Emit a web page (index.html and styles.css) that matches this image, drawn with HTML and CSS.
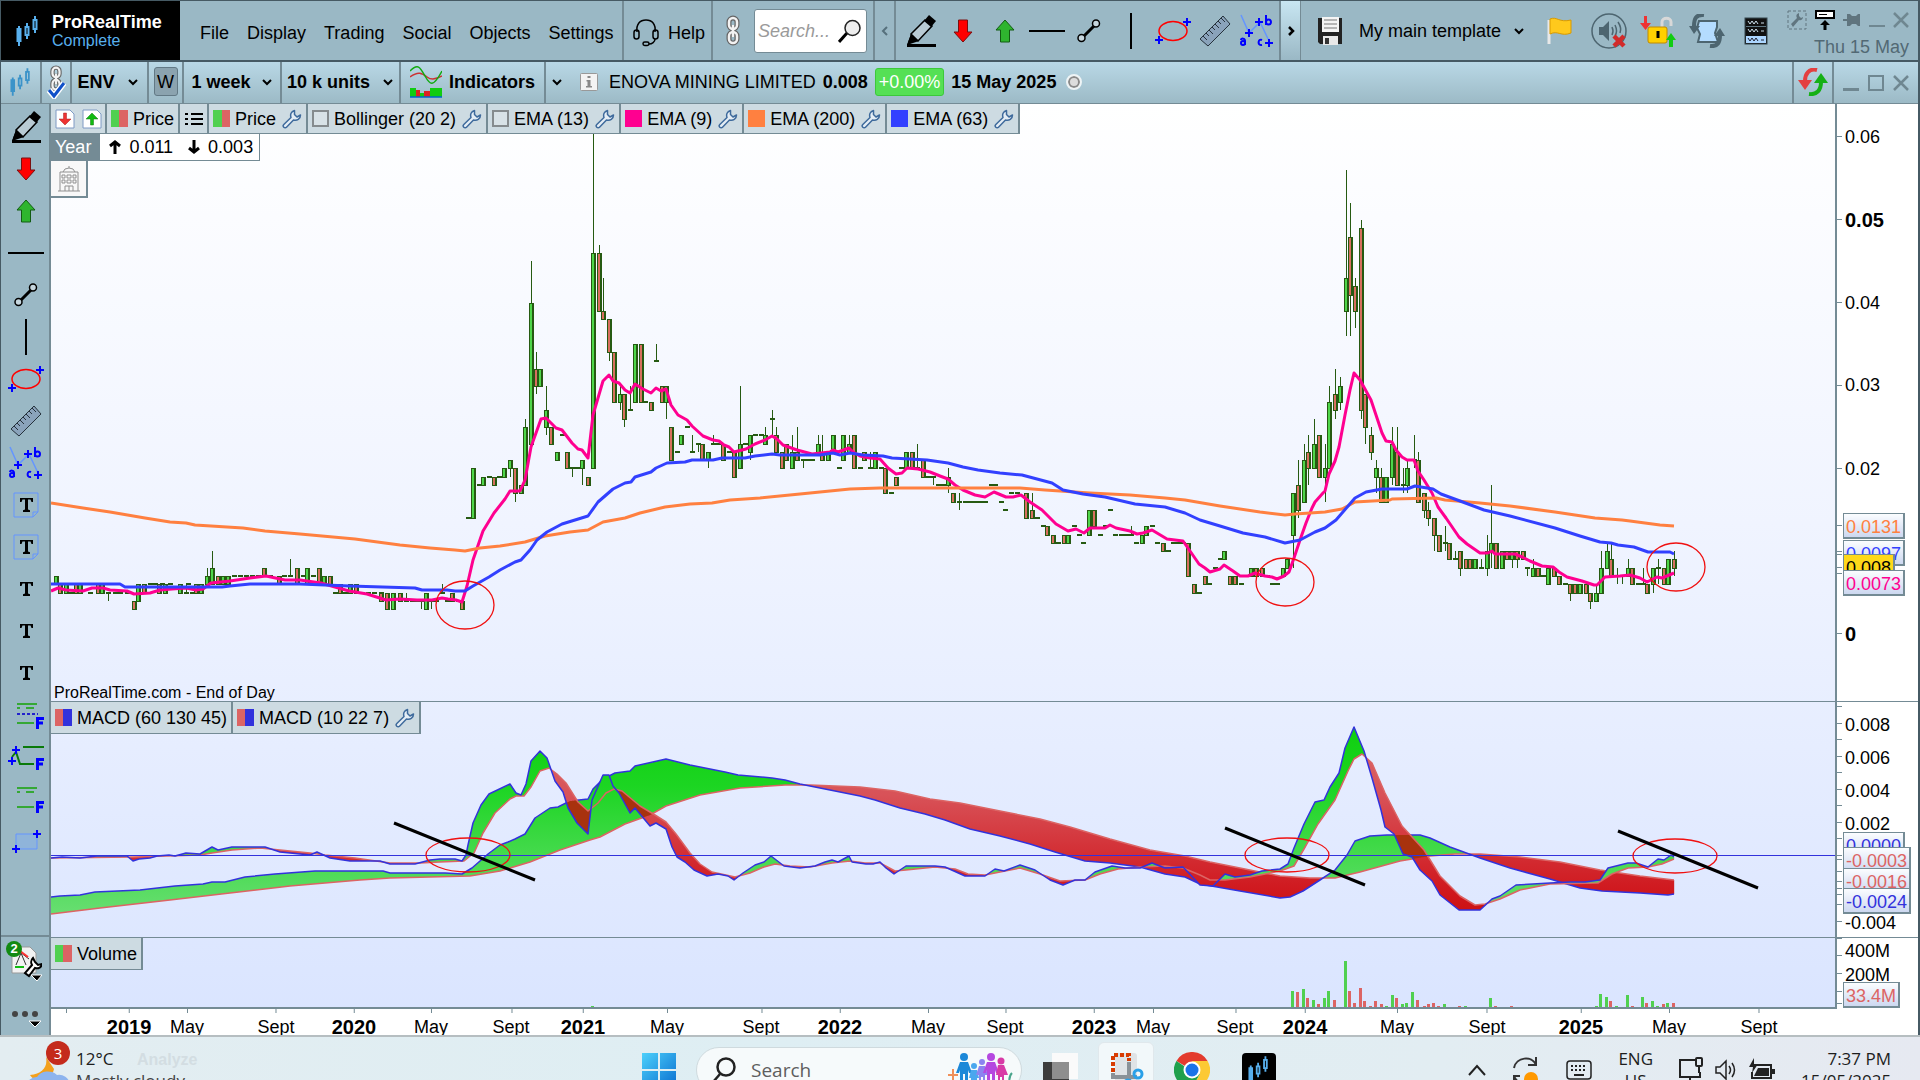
FILE: index.html
```html
<!DOCTYPE html>
<html lang="en">
<head>
<meta charset="utf-8">
<title>ProRealTime - ENOVA MINING LIMITED</title>
<link rel="stylesheet" href="styles.css">
</head>
<body>
<svg class="sprite" aria-hidden="true">
  <symbol id="i-candles" viewBox="0 0 24 30"><g fill="none" stroke="currentColor" stroke-width="2"><path d="M3 10v20M11 7v16M19 0v17"/><path fill="currentColor" d="M1.500 13h3v12h-3z"/><path fill="var(--candle-bg,#000)" d="M9.500 11h3v8h-3zM17.500 4h3v9h-3z"/></g></symbol>
  <symbol id="i-chain" viewBox="0 0 18 32"><g fill="none"><g stroke="#666" stroke-width="5"><rect x="5" y="3" width="8" height="11" rx="4"/><rect x="5" y="17" width="8" height="11" rx="4"/><path d="M9 10v12"/></g><g stroke="#f2f2f2" stroke-width="2.500"><rect x="5" y="3" width="8" height="11" rx="4"/><rect x="5" y="17" width="8" height="11" rx="4"/><path d="M9 10v12"/></g></g></symbol>
  <symbol id="i-pencil" viewBox="0 0 30 32"><path d="M1 29h29v3H1z"/><path d="M1 30 5 19l5 6z"/><path d="m5 19 14-14 7 6-14 15z" fill="#b9cbd4" stroke="#000" stroke-width="1.500"/><path d="m18 6 5-6 7 6-5 6z"/><path d="m1 30 4-11 8 7z"/></symbol>
  <symbol id="i-down" viewBox="0 0 20 24"><path d="M5.500 1h9v12H19l-9 10-9-10h4.500z" fill="#f00" stroke="#7a1010"/></symbol>
  <symbol id="i-up" viewBox="0 0 20 24"><path d="M5.500 23h9V11H19L10 1 1 11h4.500z" fill="#2fb52f" stroke="#125c12"/></symbol>
  <symbol id="i-hline" viewBox="0 0 36 4"><path d="M0 1h36v2H0z"/></symbol>
  <symbol id="i-vline" viewBox="0 0 4 36"><path d="M1 0h2v36H1z"/></symbol>
  <symbol id="i-segment" viewBox="0 0 24 24"><path d="M6 18 18 6" stroke="#000" stroke-width="3"/><circle cx="4.500" cy="19" r="3.500" fill="#c6d6de" stroke="#000" stroke-width="1.500"/><circle cx="19" cy="4.500" r="3.500" fill="#c6d6de" stroke="#000" stroke-width="1.500"/></symbol>
  <symbol id="i-ellipse" viewBox="0 0 36 28"><ellipse cx="18" cy="14" rx="14" ry="9.500" fill="none" stroke="#f00" stroke-width="1.500"/><path d="M32 1v8M28 5h8M4 19v8M0 23h8" stroke="#00f" stroke-width="2"/></symbol>
  <symbol id="i-ruler" viewBox="0 0 32 32"><path d="M1 24 24 1l7 8L9 31z" fill="#8aa3bb" stroke="#26323c"/><path d="m4 21 4 4m-1-7 3 3m0-6 4 4m-1-7 3 3m0-6 4 4m-1-7 3 3m0-6 4 4" stroke="#26323c" fill="none"/></symbol>
  <symbol id="i-abc" viewBox="0 0 34 34"><path d="m1 1 8 18L20 8l10 21" fill="none" stroke="#6495ff" stroke-width="1.500"/><g fill="none" stroke="#00f" stroke-width="2"><path d="M9 15v8M5 19h8M19 4v8M15 8h8M29 25v8M25 29h8M26 1v10M5 31v-4c0-3-4-3-4-1M22 26c-4-2-5 6 0 5"/><circle cx="28.500" cy="8" r="2.500"/><circle cx="3" cy="29" r="2"/></g></symbol>
  <symbol id="i-textbox" viewBox="0 0 26 26"><path d="M1 1h24v19l-5 5H1zM20 25v-5h5" fill="none" stroke="#6495ff"/><path d="M7 6h13v4h-1.500l-1-2.500H15v10l2 .7V20h-7v-1.800l2-.7v-10H9.500l-1 2.500H7z"/></symbol>
  <symbol id="i-text" viewBox="0 0 26 26"><path d="M7 6h13v4h-1.500l-1-2.500H15v10l2 .7V20h-7v-1.800l2-.7v-10H9.500l-1 2.500H7z"/></symbol>
  <symbol id="i-fib1" viewBox="0 0 36 28"><path d="M9 3h20M9 7h3m6 0h8M9 22h17" stroke="#35a835" stroke-width="2"/><path d="M9 13h21" stroke="#22c" stroke-width="2" stroke-dasharray="3 2"/><path d="M29.500 28V18m-1.500-.500h8M28 22h7" stroke="#00f" stroke-width="3"/></symbol>
  <symbol id="i-fib2" viewBox="0 0 36 28"><path d="M15 4h21M4 14 8 9l4 12h14" fill="none" stroke="#0a7a0a" stroke-width="2"/><path d="M8 3v8M4 7h8M4 14v8M0 18h8" stroke="#00f" stroke-width="2"/><path d="M29.500 27V17m-1.500-.500h8M28 21h7" stroke="#00f" stroke-width="3"/></symbol>
  <symbol id="i-fib3" viewBox="0 0 36 28"><path d="M9 3h20M9 7h3m6 0h8M9 22h17" stroke="#35a835" stroke-width="2"/><path d="M29.500 28V18m-1.500-.500h8M28 22h7" stroke="#00f" stroke-width="3"/></symbol>
  <symbol id="i-rect" viewBox="0 0 30 24"><path d="M5 5h21v15H5z" fill="#8fb4da" stroke="#6495ff"/><path d="M26 1v8M22 5h8M5 16v8M1 20h8" stroke="#00f" stroke-width="2"/></symbol>
  <symbol id="i-wrench" viewBox="0 0 20 20"><path d="M12.500 1.500C9 2.500 8 5.500 9 8.500L1.800 15.500a1.800 1.800 0 0 0 2.700 2.700L11.500 11c3.500 1 7-1 7-5l-3.500 2-2.500-2.500z" fill="#e4edf5" stroke="#3e6a9c" stroke-width="1.500" stroke-linejoin="round"/></symbol>
  <symbol id="i-chev" viewBox="0 0 12 8"><path d="m2 2 4 4 4-4" fill="none" stroke="#000" stroke-width="2"/></symbol>
  <symbol id="i-x" viewBox="0 0 16 16"><path d="m1 1 14 14M15 1 1 15" stroke="#6f8791" stroke-width="2.500"/></symbol>
  <symbol id="i-docdown" viewBox="0 0 20 20"><path d="M1 1h14l4 4v14H1z" fill="#fff" stroke="#7e9ac4"/><path d="M8.500 4h3v6H16l-6 6-6-6h4.500z" fill="#e33" stroke="#a22" stroke-width=".5"/></symbol>
  <symbol id="i-docup" viewBox="0 0 20 20"><path d="M1 1h14l4 4v14H1z" fill="#fff" stroke="#7e9ac4"/><path d="M8.500 16h3v-6H16l-6-6-6 6h4.500z" fill="#1b1" stroke="#171" stroke-width=".5"/></symbol>
  <symbol id="i-list" viewBox="0 0 18 14"><path d="M0 1h3v2H0zm6 0h12v2H6zM0 6h3v2H0zm6 0h12v2H6zM0 11h3v2H0zm6 0h12v2H6z"/></symbol>
</svg>

<div class="app">
  <header class="topbar">
    <div class="brand">
      <svg width="24" height="30"><use href="#i-candles"/></svg>
      <div><div class="brand-name">ProRealTime</div><div class="brand-plan">Complete</div></div>
    </div>
    <nav class="menu">
      <a href="#">File</a><a href="#">Display</a><a href="#">Trading</a><a href="#">Social</a><a href="#">Objects</a><a href="#">Settings</a>
    </nav>
    <button class="cell help">
      <svg width="26" height="28" viewBox="0 0 26 28" fill="none" stroke="#000" stroke-width="1.500"><path d="M4 13C3 5 7 1 13 1s10 4 9 12"/><rect x="1" y="11" width="5" height="9" rx="2.500"/><rect x="20" y="11" width="5" height="9" rx="2.500"/><path d="M22 20c0 3-3 5-6 5"/><rect x="10" y="23" width="6" height="3.500" rx="1.700"/></svg>
      Help
    </button>
    <div class="cell search-cell">
      <button class="plain" aria-label="Link"><svg width="18" height="32"><use href="#i-chain"/></svg></button>
      <label class="search"><input type="text" placeholder="Search..." aria-label="Search">
        <svg width="24" height="24" viewBox="0 0 24 24"><path d="m1 23 8-9" stroke="#000" stroke-width="3"/><circle cx="14.500" cy="9" r="7.500" fill="#eee" stroke="#222" stroke-width="1.500"/></svg></label>
    </div>
    <button class="cell scroll dim" aria-label="Previous tools"><svg width="8" height="12" viewBox="0 0 8 12"><path d="M6 2 2 6l4 4" fill="none" stroke="#56707c" stroke-width="2"/></svg></button>
    <div class="tools">
      <button aria-label="Pencil"><svg width="30" height="32"><use href="#i-pencil"/></svg></button>
      <button aria-label="Down arrow"><svg width="20" height="24"><use href="#i-down"/></svg></button>
      <button aria-label="Up arrow"><svg width="20" height="24"><use href="#i-up"/></svg></button>
      <button aria-label="Horizontal line"><svg width="36" height="4"><use href="#i-hline"/></svg></button>
      <button aria-label="Segment"><svg width="24" height="24"><use href="#i-segment"/></svg></button>
      <button aria-label="Vertical line"><svg width="4" height="36"><use href="#i-vline"/></svg></button>
      <button aria-label="Ellipse"><svg width="36" height="28"><use href="#i-ellipse"/></svg></button>
      <button aria-label="Ruler"><svg width="32" height="32"><use href="#i-ruler"/></svg></button>
      <button aria-label="Pattern"><svg width="34" height="34"><use href="#i-abc"/></svg></button>
    </div>
    <button class="cell scroll more" aria-label="More tools"><svg width="8" height="12" viewBox="0 0 8 12"><path d="m2 2 4 4-4 4" fill="none" stroke="#000" stroke-width="2.500"/></svg></button>
    <button class="save" aria-label="Save template"><svg width="26" height="28" viewBox="0 0 26 28"><path d="M1 1h24v26H3l-2-2z" fill="#222"/><path d="M5 0h17v15H5z" fill="#f4f4f4"/><path d="M7 3h13M7 7h13M7 11h13" stroke="#777"/><path d="M6 19h15v9H6z" fill="#e8e8e8"/><path d="M8 21h4v6H8z" fill="#333"/></svg></button>
    <button class="template">My main template <svg width="12" height="8"><use href="#i-chev"/></svg></button>
    <div class="actions">
      <button aria-label="Flag"><svg width="26" height="28" viewBox="0 0 26 28"><path d="M2 3v24" stroke="#e8e8e8" stroke-width="3"/><path d="M3 2c7-3 9 4 21 1v13c-10 4-13-3-21 1z" fill="#ffc91c" stroke="#d99a00"/></svg></button>
      <button aria-label="Sound off"><svg width="36" height="36" viewBox="0 0 36 36"><circle cx="18" cy="18" r="17" fill="none" stroke="#4d6570" stroke-width="1.500"/><path d="M8 14h4l6-6v20l-6-6H8z" fill="#4d6570"/><path d="M21 14q2 4 0 8m3-10q3 6 0 11m3-14q4 6 2 11" fill="none" stroke="#4d6570" stroke-width="1.500"/><path d="m23 23 10 10m0-10L23 33" stroke="#d22a2a" stroke-width="4.500"/></svg></button>
      <button aria-label="Trading lock"><svg width="36" height="32" viewBox="0 0 36 32"><path d="M22 12V7c0-5 9-5 9 0v4" fill="none" stroke="#d8d8d8" stroke-width="3"/><rect x="8" y="12" width="19" height="16" rx="2" fill="#ffd000" stroke="#c08a00"/><path d="M16.500 16h3v7h-3z"/><path d="M4 1h3v7h4l-5.500 7L0 8h4z" fill="#e33"/><path d="M29 32h4v-7h3l-5-7-5 7h3z" fill="#1c1"/></svg></button>
      <button aria-label="Synchronise"><svg width="36" height="34" viewBox="0 0 36 34"><path d="M10 7h18v6l-2 6 3 9H9l2-8-3-6z" fill="#b4dcff" stroke="#4d6570" stroke-width="2"/><path d="M15 1C7 0 5 5 5 12M21 32c8 1 10-4 10-11" fill="none" stroke="#4d6570" stroke-width="4"/><path d="M0 12h11l-6 8zM36 22H25l6-8z" fill="#4d6570"/></svg></button>
      <button aria-label="Server"><svg width="24" height="28" viewBox="0 0 24 28"><rect x="1" y="1" width="22" height="26" fill="#111" stroke="#34464f"/><path d="M2 19h20v7H2z" fill="#acd6ff"/><path d="M2 9.500h20" stroke="#5f7682"/><path d="m4 4 2 3 2-3 2 3 2-3 2 3m3-1h3M4 12l2 3 2-3 2 3 2-3 2 3m3-1h3" fill="none" stroke="#cfe2ee"/><path d="m4 21 2 3 2-3 2 3 2-3 2 3m3-1h3" fill="none" stroke="#223"/></svg></button>
    </div>
    <div class="session">
      <div class="session-controls">
        <button aria-label="Settings"><svg width="20" height="20" viewBox="0 0 20 20"><rect x="1" y="1" width="18" height="18" fill="none" stroke="#60757f" stroke-dasharray="3 2"/><path d="M12 3c-3 1-3 3-2 5l-6 6 2 3 6-7c2 1 4-1 4-3l-2 1-2-2z" fill="#60757f"/></svg></button>
        <button aria-label="Dock"><svg width="20" height="20" viewBox="0 0 20 20"><path d="M1 1h18v7H1z" fill="#fff" stroke="#000" stroke-width="2"/><path d="M4 4h8v1H4zM10 10l-5 5h3.500v5h3v-5H15z"/></svg></button>
        <button aria-label="Pin"><svg width="18" height="14" viewBox="0 0 18 14"><path d="M0 6h4V1h3l2 2h4l2-2h2v12h-2l-2-2H9l-2 2H4V8H0z" fill="#60757f"/></svg></button>
        <button aria-label="Minimise"><svg width="16" height="16" viewBox="0 0 16 16"><path d="M0 13h16v2H0z" fill="#6f8791"/></svg></button>
        <button aria-label="Close"><svg width="16" height="16"><use href="#i-x"/></svg></button>
      </div>
      <div class="session-date">Thu 15 May</div>
    </div>
  </header>

  <div class="chartbar">
    <div class="bcell mark"><svg width="22" height="30"><use href="#i-candles"/></svg></div>
    <button class="bcell linked" aria-label="Linked chart"><svg width="20" height="34" viewBox="0 0 20 34"><use href="#i-chain" x="1" y="0" width="18" height="28"/><path d="m3 25 5 6 10-13" fill="none" stroke="#fff" stroke-width="6"/><path d="m3 25 5 6 10-13" fill="none" stroke="#1050c8" stroke-width="3"/></svg></button>
    <button class="bcell sym">ENV <svg width="12" height="8"><use href="#i-chev"/></svg></button>
    <div class="bcell wcell"><button class="wbtn">W</button></div>
    <button class="bcell frame">1 week <svg width="12" height="8"><use href="#i-chev"/></svg></button>
    <button class="bcell units">10 k units <svg width="12" height="8"><use href="#i-chev"/></svg></button>
    <button class="bcell indi"><svg width="32" height="32" viewBox="0 0 32 32"><path d="M0 11C8 5 12 7 17 11s10 2 15-1" fill="none" stroke="#c33" stroke-width="1.500"/><path d="M0 5C8-3 10 1 15 10s8 12 17-5" fill="none" stroke="#1a1" stroke-width="1.500"/><path d="M0 22h6v9H0zm20 0h6v9h-6zm6 0h6v9h-6zM10 27h4v4h-4z" fill="#1c1"/><path d="M6 24h4v7H6zm8 1h6v6h-6z" fill="#d22"/><path d="M0 31h32" stroke="#06c" stroke-width="1.500"/></svg>Indicators</button>
    <button class="drop" aria-label="Indicator list"><svg width="12" height="8"><use href="#i-chev"/></svg></button>
    <button class="info" aria-label="Information"><svg width="18" height="18" viewBox="0 0 18 18"><rect x=".5" y=".5" width="17" height="17" rx="1" fill="#f3f3f3" stroke="#999"/><path d="M7.500 3h3v2h-3zM6.500 7h4v6h1.500v1.500h-6V13h1.500V8.500h-1z" fill="#888"/></svg></button>
    <div class="quote"><span>ENOVA MINING LIMITED</span><b>0.008</b><span class="pct">+0.00%</span><b>15 May 2025</b><span class="status"></span></div>
    <button class="bcell refresh" aria-label="Refresh"><svg width="30" height="28" viewBox="0 0 30 28"><path d="M19 2C11 0 7 6 7 13" fill="none" stroke="#e34040" stroke-width="4"/><path d="M0 12h14l-7 10z" fill="#e34040"/><path d="M11 26c8 1 12-4 12-12" fill="none" stroke="#15b015" stroke-width="4"/><path d="M30 15H16l7-10z" fill="#15b015"/></svg></button>
    <div class="wincontrols">
      <button aria-label="Minimise chart"><svg width="16" height="16" viewBox="0 0 16 16"><path d="M0 13h16v3H0z" fill="#6f8791"/></svg></button>
      <button aria-label="Maximise chart"><svg width="16" height="16" viewBox="0 0 16 16"><path d="M1 1h14v14H1z" fill="none" stroke="#6f8791" stroke-width="2"/></svg></button>
      <button aria-label="Close chart"><svg width="16" height="16"><use href="#i-x"/></svg></button>
    </div>
  </div>

  <main class="workspace">
    <aside class="sidebar">
      <div class="palette">
        <button aria-label="Pencil"><svg width="30" height="32"><use href="#i-pencil"/></svg></button>
        <button aria-label="Down arrow"><svg width="20" height="24"><use href="#i-down"/></svg></button>
        <button aria-label="Up arrow"><svg width="20" height="24"><use href="#i-up"/></svg></button>
        <button aria-label="Horizontal line"><svg width="36" height="4"><use href="#i-hline"/></svg></button>
        <button aria-label="Segment"><svg width="24" height="24"><use href="#i-segment"/></svg></button>
        <button aria-label="Vertical line"><svg width="4" height="36"><use href="#i-vline"/></svg></button>
        <button aria-label="Ellipse"><svg width="36" height="28"><use href="#i-ellipse"/></svg></button>
        <button aria-label="Ruler"><svg width="32" height="32"><use href="#i-ruler"/></svg></button>
        <button aria-label="Pattern"><svg width="34" height="34"><use href="#i-abc"/></svg></button>
        <button aria-label="Note"><svg width="26" height="26"><use href="#i-textbox"/></svg></button>
        <button aria-label="Note"><svg width="26" height="26"><use href="#i-textbox"/></svg></button>
        <button aria-label="Text"><svg width="26" height="26"><use href="#i-text"/></svg></button>
        <button aria-label="Text"><svg width="26" height="26"><use href="#i-text"/></svg></button>
        <button aria-label="Text"><svg width="26" height="26"><use href="#i-text"/></svg></button>
        <button aria-label="Fibonacci retracement"><svg width="36" height="28"><use href="#i-fib1"/></svg></button>
        <button aria-label="Fibonacci projection"><svg width="36" height="28"><use href="#i-fib2"/></svg></button>
        <button aria-label="Fibonacci levels"><svg width="36" height="28"><use href="#i-fib3"/></svg></button>
        <button aria-label="Rectangle"><svg width="30" height="24"><use href="#i-rect"/></svg></button>
      </div>
      <div class="sidebar-foot">
        <button class="reports" aria-label="Reports"><svg width="32" height="40" viewBox="0 0 32 40"><path d="M2 6h18l6 6v20H2z" fill="#f2f2f2" stroke="#999"/><path d="M5 26h9" stroke="#1b1" stroke-width="2"/><path d="m6 24 5-12 5 12M10 11l9 7" fill="none" stroke="#333"/><path d="m10 10 8 6" stroke="#f33" stroke-width="2"/><path d="M23 17c-3 3-2 5-1 7l-7 8 4 3 6-8c3 1 6 0 7-4l-4 1-3-3z" fill="#fff" stroke="#000" stroke-width="2"/><path d="M21 34h11l-5 6z" stroke="#fff"/></svg><span class="count">2</span></button>
        <button class="dots" aria-label="More"><svg width="30" height="18" viewBox="0 0 30 18"><g fill="#444"><circle cx="4" cy="4" r="3"/><circle cx="14" cy="4" r="3"/><circle cx="24" cy="4" r="3"/></g><path d="M18 11h12l-6 6z" stroke="#fff"/></svg></button>
      </div>
    </aside>

    <section class="charts">
      <div class="panel price-panel">
        <svg class="plot" viewBox="51 104 1784 597" preserveAspectRatio="none" id="price"></svg>
        <div class="overlay">
          <div class="legend">
            <div class="chip pair"><button aria-label="Move down"><svg width="20" height="20"><use href="#i-docdown"/></svg></button><button aria-label="Move up"><svg width="20" height="20"><use href="#i-docup"/></svg></button></div>
            <button class="chip"><i class="sw gr"></i>Price</button>
            <button class="chip" aria-label="List"><svg width="18" height="14"><use href="#i-list"/></svg></button>
            <button class="chip"><i class="sw gr"></i>Price<svg width="20" height="20"><use href="#i-wrench"/></svg></button>
            <button class="chip"><i class="sw off"></i>Bollinger (20 2)<svg width="20" height="20"><use href="#i-wrench"/></svg></button>
            <button class="chip"><i class="sw off"></i>EMA (13)<svg width="20" height="20"><use href="#i-wrench"/></svg></button>
            <button class="chip"><i class="sw pink"></i>EMA (9)<svg width="20" height="20"><use href="#i-wrench"/></svg></button>
            <button class="chip"><i class="sw orange"></i>EMA (200)<svg width="20" height="20"><use href="#i-wrench"/></svg></button>
            <button class="chip"><i class="sw blue"></i>EMA (63)<svg width="20" height="20"><use href="#i-wrench"/></svg></button>
          </div>
          <div class="range"><span class="year">Year</span><span class="hl"><svg width="14" height="14" viewBox="0 0 14 14"><path d="M7 1v13M2 6l5-4 5 4" fill="none" stroke="#000" stroke-width="3"/></svg>0.011</span><span class="hl"><svg width="14" height="14" viewBox="0 0 14 14"><path d="M7 0v13M2 8l5 4 5-4" fill="none" stroke="#000" stroke-width="3"/></svg>0.003</span></div>
          <button class="company" aria-label="Company"><svg width="22" height="26" viewBox="0 0 22 26" fill="none" stroke="#909090"><path d="M0 25h22M2 25V6h18v19M5 6q1-4 6-4t6 4M11 2V0M7 25v-5h8v5M11 20v5"/><path d="M4 9h3v3H4zm5 0h4v3H9zm6 0h3v3h-3zM4 14h3v3H4zm5 0h4v3H9zm6 0h3v3h-3z"/></svg></button>
        </div>
        <div class="source">ProRealTime.com - End of Day</div>
      </div>
      <div class="axis" id="price-axis"></div>

      <div class="panel macd-panel">
        <svg class="plot" viewBox="51 702 1784 235" preserveAspectRatio="none" id="macd"></svg>
        <div class="overlay"><div class="legend">
          <button class="chip"><i class="sw rb"></i>MACD (60 130 45)</button>
          <button class="chip"><i class="sw rb"></i>MACD (10 22 7)<svg width="20" height="20"><use href="#i-wrench"/></svg></button>
        </div></div>
      </div>
      <div class="axis" id="macd-axis"></div>

      <div class="panel volume-panel">
        <svg class="plot" viewBox="51 938 1784 69" preserveAspectRatio="none" id="volume"></svg>
        <div class="overlay"><div class="legend"><button class="chip"><i class="sw gr"></i>Volume</button></div></div>
      </div>
      <div class="axis" id="volume-axis"></div>
      <div class="times" id="times"></div>
    </section>
  </main>
</div>

<footer class="taskbar">
  <div class="taskrow">
    <button class="weather">
      <span class="wicon"><svg width="42" height="44" viewBox="0 0 42 44"><path d="M18 2c2 10-4 17-16 18 4 8 22 6 24-6z" fill="#f3a01c"/><path d="M8 42a10 10 0 0 1 1-20 12 10 0 0 1 20-2 10 10 0 0 1 4 22z" fill="#8db4ee"/></svg><span class="alert">3</span></span>
      <span class="wtext">12°C<br><span class="soft">Mostly cloudy</span></span>
    </button>
    <span class="ghost">Analyze</span>
    <div class="center">
      <button class="start" aria-label="Start"><svg width="34" height="34" viewBox="0 0 34 34"><defs><linearGradient id="win" x2="1" y2="1"><stop stop-color="#4cd0fb"/><stop offset="1" stop-color="#0a6fd0"/></linearGradient></defs><path d="M0 0h16v16H0zM18 0h16v16H18zM0 18h16v16H0zM18 18h16v16H18z" fill="url(#win)"/></svg></button>
      <label class="pill"><svg width="24" height="26" viewBox="0 0 24 26" fill="none" stroke="#222" stroke-width="2.500"><circle cx="13" cy="10" r="8.500"/><path d="m7 17-6 7"/></svg><input type="text" placeholder="Search" aria-label="Search Windows">
        <svg width="66" height="34" viewBox="0 0 66 34"><path d="M5 16v14M0 22h10" stroke="#f0905a" stroke-width="2"/><g fill="#1c88d8"><circle cx="16" cy="4" r="4"/><path d="M12 9h8l4 11h-3l-1-3v17h-3V21h-2v13h-3V17l-1 3H8z"/></g><g fill="#4aa7ee"><circle cx="26" cy="13" r="3"/><path d="M23 17h6l2 8h-2v9h-2v-7h-2v7h-2v-9h-2z"/></g><g fill="#8c84f0"><circle cx="34" cy="9" r="3"/><path d="M31 13h6l3 9h-3v12h-2V24h-2v10h-2V22h-3z"/></g><g fill="#b548e0"><circle cx="43" cy="4" r="4"/><path d="M39 9h8l4 11h-3l-1-3v17h-3V21h-2v13h-3V17l-1 3h-3z"/></g><g fill="#d83aa6"><circle cx="53" cy="8" r="3.500"/><path d="M50 12h6l4 10h-4v12h-2V24h-2v10h-2V22h-2z"/></g><path d="M64 20q-4 4-2 12" stroke="#4aa58c" stroke-width="2" fill="none"/></svg></label>
      <button aria-label="Task view"><svg width="36" height="36" viewBox="0 0 36 36"><path d="M10 1h26v26H10z" fill="#fafafa"/><path d="M1 10h26v26H1z" fill="#3c3c3c"/><path d="M10 10h17v17H10z" fill="#8e8e8e"/></svg></button>
      <button class="active" aria-label="Snipping Tool"><svg width="36" height="36" viewBox="0 0 36 36"><rect x="7" y="1" width="22" height="32" rx="3" fill="#dfe3e6"/><path d="M5 20V3h16v6" fill="none" stroke="#d83b01" stroke-width="4" stroke-dasharray="4 2"/><path d="M5 21v4h24M21 10v20" fill="none" stroke="#8a9298" stroke-width="4"/><circle cx="30" cy="22" r="4" fill="none" stroke="#2aa0e8" stroke-width="3"/><circle cx="20" cy="32" r="4" fill="none" stroke="#2aa0e8" stroke-width="3"/></svg></button>
      <button aria-label="Chrome"><svg width="36" height="36" viewBox="0 0 36 36"><path d="M18 18 2.400 9A18 18 0 0 1 33.600 9z" fill="#e33b2e"/><path d="M18 18h-2L2.400 9A18 18 0 0 0 18 36l8-14z" fill="#1fa04c"/><path d="M18 9h15.600A18 18 0 0 1 18 36l8-14z" fill="#fcc934"/><circle cx="18" cy="18" r="8.500" fill="#fff"/><circle cx="18" cy="18" r="6.500" fill="#1a73e8"/></svg></button>
      <button aria-label="ProRealTime" class="prt"><svg width="22" height="28"><use href="#i-candles"/></svg></button>
    </div>
    <div class="tray">
      <button aria-label="Hidden icons"><svg width="18" height="12" viewBox="0 0 18 12"><path d="m1 11 8-9 8 9" fill="none" stroke="#222" stroke-width="2"/></svg></button>
      <button aria-label="Updates"><svg width="28" height="32" viewBox="0 0 28 32"><path d="M2 14C4 3 20 1 24 11M24 3v8h-8M2 28v-6h6M2 22c2 5 6 8 12 8" fill="none" stroke="#333" stroke-width="2"/><circle cx="19" cy="25" r="7" fill="#f90"/></svg></button>
      <button aria-label="Keyboard"><svg width="26" height="20" viewBox="0 0 26 20"><rect x="1" y="1" width="24" height="18" rx="3" fill="none" stroke="#222" stroke-width="1.500"/><path d="M5 6h16M5 10h16" stroke="#222" stroke-width="2" stroke-dasharray="2 2"/><path d="M8 15h10" stroke="#222" stroke-width="2"/></svg></button>
      <div class="stack lang">ENG<br>US</div>
      <div class="status-icons">
        <svg width="24" height="26" viewBox="0 0 24 26" fill="none" stroke="#222" stroke-width="2"><path d="M17 3H1v17h20v-5M11 20v5M6 25h10"/><rect x="17" y="1" width="6" height="8" rx="1"/><path d="M20 9v7"/></svg>
        <svg width="22" height="22" viewBox="0 0 22 22" fill="none" stroke="#222" stroke-width="1.500"><path d="M1 8h4l6-6v18l-6-6H1zM14 7q3 4 0 8M17 4q5 7 0 14"/></svg>
        <svg width="26" height="24" viewBox="0 0 26 24"><path d="M7 7h15v13H3v-6" fill="none" stroke="#222" stroke-width="2"/><path d="M9 10h11v8H5z" fill="#222"/><path d="M23 11h3v5h-3zM5 0 0 9h4l-1 6 6-9H5z" fill="#222"/></svg>
      </div>
      <div class="stack clock">7:37 PM<br>15/05/2025</div>
    </div>
  </div>
</footer>
<script src="script.js"></script>
</body>
</html>
```
FILE: styles.css
```css
* { box-sizing: border-box; }
html, body { height: 100%; }
body {
  margin: 0;
  display: flex;
  flex-direction: column;
  overflow: hidden;
  font: 18px/22px "Liberation Sans", Arial, sans-serif;
  color: #000;
  --edge: #465a64;
  --rule: #748b95;
  --steel: #9ab8c5;
}
button, input { font: inherit; color: inherit; border: 0; background: none; padding: 0; margin: 0; }
button { display: flex; align-items: center; justify-content: center; }
a { color: inherit; text-decoration: none; }
svg { display: block; flex: none; }
.sprite { position: absolute; width: 0; height: 0; }

.app { flex: 1; min-height: 0; display: flex; flex-direction: column; background: var(--edge); padding: 1px 2px 0 1px; }

/* Top bar */
.topbar { height: 59px; flex: none; display: flex; background: var(--steel); white-space: nowrap; }
.brand { width: 179px; background: #000; color: #58b0ee; display: flex; align-items: center; gap: 12px; padding-left: 15px; }
.brand-name { color: #fff; font-weight: bold; line-height: 20px; }
.brand-plan { font-size: 16px; line-height: 18px; }
.menu { display: flex; align-items: center; gap: 18px; padding: 5px 8px 0 20px; width: 442px; }
.cell { border-left: 2px solid var(--rule); }
.help { width: 89px; gap: 9px; padding: 4px 0 0 3px; }
.search-cell { width: 162px; display: flex; align-items: center; padding-left: 11px; gap: 12px; }
.search { width: 113px; height: 44px; background: #fff; border: 1px solid var(--rule); border-radius: 3px; display: flex; align-items: center; padding: 0 3px; }
.search input { width: 80px; font-style: italic; outline: 0; }
.search input::placeholder { color: #9a9a9a; opacity: 1; }
.scroll { width: 21px; }
.tools { display: flex; border-left: 2px solid var(--rule); padding-left: 4px; width: 385px; }
.more { width: 22px; background: linear-gradient(#c8e6f2, #9ab8c5); border-right: 1px solid var(--rule); }
.tools button { width: 42px; }
.save { width: 58px; }
.template { width: 176px; gap: 12px; justify-content: flex-start; }
.actions { display: flex; }
.actions button { width: 49px; }
.session { margin-left: auto; padding: 9px 9px 0 0; color: #526974; text-align: right; }
.session-controls { display: flex; gap: 8px; align-items: center; height: 20px; }
.session-date { line-height: 34px; }

/* Chart bar */
.chartbar { height: 41px; flex: none; display: flex; margin-top: 2px; background: linear-gradient(#b9d8e6, #9cbac6); font-weight: bold; white-space: nowrap; }
.chartbar > * { padding-bottom: 2px; }
.bcell { border-right: 2px solid var(--rule); }
.mark { width: 41px; display: flex; align-items: center; justify-content: center; color: #3b93c9; --candle-bg: #b0cedc; }
.linked { width: 30px; }
.sym { width: 77px; gap: 12px; padding-right: 3px; }
.wcell { width: 35px; display: flex; align-items: center; justify-content: center; }
.wbtn { width: 24px; height: 29px; border: 1px solid #627985; border-radius: 3px; background: #8ba3af; font-weight: normal; }
.frame { width: 98px; gap: 10px; }
.units { width: 119px; gap: 12px; }
.indi { width: 145px; gap: 7px; }
.drop { width: 22px; }
.info { width: 41px; }
.quote { display: flex; align-items: center; gap: 7px; font-weight: bold; }
.quote span:first-child { font-weight: normal; }
.pct { font-weight: normal; color: #fff; background: #55e055; border: 1px solid #3cc83c; border-radius: 3px; padding: 1px 3px; line-height: 24px; }
.status { width: 16px; height: 16px; border-radius: 50%; border: 2px solid #eef4f6; background: #ddd; box-shadow: inset 0 0 0 2px #8a8a8a; margin-left: 3px; }
.refresh { margin-left: auto; width: 42px; border-left: 2px solid var(--rule); }
.wincontrols { display: flex; gap: 9px; padding: 0 9px; align-items: center; }

/* Workspace */
.workspace { flex: 1; min-height: 0; display: flex; border-top: 1px solid var(--rule); }
.sidebar { width: 50px; flex: none; background: var(--steel); border-right: 2px solid var(--rule); display: flex; flex-direction: column; overflow: hidden; }
.palette { flex: 1; min-height: 0; padding-top: 2px; overflow: hidden; }
.palette button { width: 50px; height: 42px; }
.sidebar-foot { height: 100px; flex: none; border-top: 2px solid var(--rule); display: flex; flex-direction: column; align-items: center; justify-content: space-between; padding: 4px 0 7px 2px; }
.reports { position: relative; }
.count { position: absolute; left: -4px; top: 0; width: 16px; height: 16px; border-radius: 50%; background: #128a12; color: #fff; font: bold 13px/16px "Liberation Sans", sans-serif; }

.charts {
  flex: 1; min-width: 0; display: grid;
  grid-template-columns: minmax(0, 1fr) 83px;
  grid-template-rows: minmax(0, 597fr) minmax(0, 236fr) minmax(0, 72fr) 26px;
  background: linear-gradient(#fff, #f0f4ff 45%, #d9e4ff);
}
.panel { position: relative; min-height: 0; }
.plot { position: absolute; inset: 0; width: 100%; height: 100%; }
.macd-panel, .volume-panel, #macd-axis, #volume-axis { border-top: 1px solid var(--rule); }
.volume-panel { border-bottom: 2px solid var(--rule); }
.overlay { position: relative; display: flex; flex-direction: column; align-items: flex-start; }
.legend { display: flex; white-space: nowrap; border-bottom: 1px solid var(--rule); }
.chip { height: 29px; display: flex; align-items: center; gap: 5px; padding: 0 4px; background: #cddbe2; border-right: 2px solid var(--rule); }
.pair { padding: 0 3px; gap: 6px; }
.chip svg { margin-left: 1px; }
.sw { width: 17px; height: 17px; }
.gr { background: linear-gradient(90deg, #50d050 50%, #dc6464 50%); }
.rb { background: linear-gradient(90deg, #dc6464 50%, #3232dc 50%); }
.off { border: 2px solid #858b8e; background: #d8e2e7; }
.pink { background: #ff0090; }
.orange { background: #ff8040; }
.blue { background: #3240ff; }
.macd-panel .chip, .volume-panel .chip { height: 31px; }
.range { display: flex; background: #fff; border: 1px solid var(--rule); border-width: 0 1px 1px 0; line-height: 26px; }
.year { background: var(--rule); color: #fff; padding: 0 9px 0 4px; }
.hl { display: flex; align-items: center; gap: 7px; padding: 0 6px 0 8px; }
.company { width: 37px; height: 37px; background: #f8f8f8; border: 1px solid var(--rule); border-width: 0 2px 2px 0; }
.source { position: absolute; left: 3px; bottom: 0; font-size: 16px; line-height: 16px; }

.axis { position: relative; background: #fff; border-left: 2px solid var(--rule); overflow: hidden; }
.lab { position: absolute; left: 8px; transform: translateY(-50%); line-height: 20px; }
.lab.major, .time.major { font-size: 20px; font-weight: bold; }
.tick { position: absolute; left: 0; width: 5px; height: 1px; background: var(--rule); }
.tag { position: absolute; left: 6px; height: 26px; line-height: 24px; padding: 1px 2px; border: 1px solid var(--rule); border-right-width: 2px; border-bottom-width: 2px; background: linear-gradient(#fbfdff, #cdd8f0); }
.tag.last { background: #ffd91a; }
.times { grid-column: 1 / -1; background: #fff; position: relative; overflow: hidden; }
.time { position: absolute; top: 0; transform: translateX(-50%); padding-top: 7px; line-height: 22px; }
.time::before { content: ""; position: absolute; left: 50%; top: 0; width: 1px; height: 4px; background: var(--rule); }

/* Task bar */
.taskbar { height: 45px; flex: none; overflow: hidden; border-top: 2px solid #b6bec1; background: linear-gradient(90deg, #e3edf1, #deeef3 40%, #e2edf2 75%, #e6e9f1); font-family: "Open Sans", "Noto Sans", sans-serif; font-size: 17px; color: #1d1d1d; }
.taskrow { height: 66px; display: flex; justify-content: space-between; align-items: center; position: relative; padding: 0 29px 0 28px; white-space: nowrap; }
.weather { gap: 6px; text-align: left; }
.wicon { position: relative; padding-top: 14px; }
.alert { position: absolute; left: 18px; top: 0; width: 24px; height: 24px; border-radius: 50%; background: #c42b1c; color: #fff; font-size: 15px; line-height: 24px; text-align: center; }
.soft { color: #444; }
.ghost { position: absolute; left: 137px; top: 12px; color: #d3dde2; font-family: "Liberation Sans", sans-serif; font-weight: bold; font-size: 16px; }
.center { position: absolute; left: 642px; top: 0; height: 66px; display: flex; align-items: center; gap: 20px; }
.pill { width: 326px; height: 46px; border-radius: 23px; border: 1px solid #cfdade; background: #f6fafb; display: flex; align-items: center; gap: 14px; padding: 0 7px 0 16px; font-size: 19px; }
.pill input { flex: 1; min-width: 0; outline: 0; }
.pill input::placeholder { color: #5e5e5e; opacity: 1; }
.center .active { width: 56px; height: 56px; background: #f2f8fa; border-radius: 6px; border: 1px solid #e0e8ec; }
.prt { width: 34px; height: 34px; background: #000; border-radius: 4px; color: #58b0ee; margin-left: 12px; }
.tray { display: flex; align-items: center; gap: 26px; margin-left: auto; }
.stack { text-align: center; }
.status-icons { display: flex; align-items: center; gap: 12px; }
.clock { text-align: right; width: 90px; }
```
FILE: script.js
```js
const NS = 'http://www.w3.org/2000/svg';
const DARK = '#265a12';

function add(parent, name, attrs) {
  const el = document.createElementNS(NS, name);
  for (const key in attrs) el.setAttribute(key, attrs[key]);
  parent.appendChild(el);
  return el;
}
function pairs(text) {
  return text.trim().split(/\s+/).map(p => p.split(',').map(Number));
}
const toPath = pts => 'M' + pts.map(p => p.join(' ')).join('L');

/* Candles: x, high, open, close, low (prices in thousandths) */
const candles = pairs(`
56,7,6,7,6 60,6,6,5,5 66,6,5,6,5 76,6,6,5,5 80,6,5,6,5 98,6,6,5,5 102,6,5,6,5 108,5,5,5,4 134,4,4,3,3 138,6,4,6,4 144,6,6,5,5
159,6,6,5,5 165,6,5,6,5 180,6,5,6,5 186,6,5,5,5 196,6,6,5,5 201,6,5,6,5 207,8,6,7,6 212,10,6,8,6 218,7,7,6,6 223,7,6,7,6 228,7,6,7,6
264,8,8,7,7 279,7,7,6,6 290,9,7,7,7 297,8,8,6,6 307,8,6,8,6 319,8,8,6,6 324,7,6,7,6 330,7,7,6,6 340,6,6,5,5 350,6,5,6,5 356,6,6,5,5
381,5,5,4,4 387,5,5,3,3 393,5,3,5,3 400,5,5,4,4 406,5,4,4,4 421,4,4,4,3 426,5,3,5,3 431,4,4,4,3 442,6,5,5,5 452,5,5,4,4 462,4,4,3,3
473,20,14,20,14 483,19,18,19,18 494,19,19,18,18 504,20,19,20,19 510,21,20,21,19 515,20,20,17,16 521,18,17,18,17 525,26,18,25,18 531,45,23,40,23
536,34,32,30,29 540,32,30,32,30 546,30,25,27,24 551,25,25,23,23 557,22,21,22,21 567,22,22,20,20 572,20,20,20,19 582,21,20,21,18 588,19,19,18,18
593,64,20,46,20 599,47,46,39,39 603,43,39,38,38 609,38,38,34,33 614,34,34,28,28 620,30,28,29,27 624,29,29,26,25 630,30,27,27,27 635,35,28,35,28
641,35,35,28,28 651,28,28,27,27 656,35,33,33,33 662,30,30,28,28 666,30,28,30,26 671,25,25,21,21 681,24,23,24,23 692,24,22,22,22 698,23,23,23,22
702,23,23,21,21 708,22,21,22,20 713,24,23,23,23 723,23,23,21,21 734,22,22,19,19 740,30,20,23,20 750,24,22,24,21 765,25,23,24,23 772,27,26,26,24
776,25,24,22,22 782,22,22,20,20 786,23,23,21,21 792,24,20,22,20 797,25,22,21,21 803,21,21,21,20 818,24,22,23,22 822,24,22,21,21 828,22,21,22,21
833,24,22,24,22 843,24,21,24,21 849,24,22,23,22 854,24,24,20,20 864,22,22,21,21 870,22,20,20,20 875,22,20,22,20
885,20,20,17,17 896,19,19,18,18 906,22,20,22,20 912,22,22,20,20 917,23,20,20,20 923,21,21,19,19 933,19,19,19,18 948,20,18,19,17 953,17,17,16,16 959,17,16,16,15
1026,17,17,14,14 1032,17,15,14,14 1047,13,13,12,12 1053,12,12,11,11 1064,12,12,11,11 1068,12,11,12,11 1089,15,12,15,12 1094,15,15,13,13
1131,13,12,12,12 1142,12,11,12,11 1146,13,12,13,12 1163,11,11,10,10 1188,11,11,7,7 1194,6,6,5,5 1205,7,7,6,6 1224,10,9,10,9 1230,7,7,6,6 1235,7,7,6,6
1251,8,7,8,7 1256,8,8,7,7 1262,8,8,7,7 1283,8,7,8,7 1287,9,8,9,8 1293,17,12,17,8 1298,21,18,15,14 1304,23,16,21,16 1308,24,22,20,18
1314,26,20,23,20 1319,24,24,19,19 1325,23,19,20,16 1329,30,20,28,20 1335,32,29,27,26 1340,31,28,30,27 1346,56,39,43,36 1350,52,48,41,36
1355,43,42,39,37 1361,50,49,27,26 1365,29,29,25,23 1371,25,24,22,21 1376,21,19,20,17 1381,20,19,16,16 1386,19,16,19,16 1392,25,19,23,18
1397,25,22,18,18 1403,20,18,18,17 1407,21,18,20,17 1414,24,21,21,20 1418,22,21,16,16 1424,17,17,15,14 1428,16,15,14,13 1434,14,14,12,10
1439,12,12,10,10 1445,13,11,11,10 1449,11,11,9,9 1455,10,9,9,9 1460,10,10,8,7 1466,9,9,8,8 1470,9,9,8,8 1475,9,8,9,8 1481,9,8,8,8
1487,12,8,10,7 1491,18,10,11,8 1496,11,11,8,8 1502,10,8,10,8 1507,10,10,9,9 1512,10,9,10,8 1517,10,10,9,8 1523,10,10,9,9 1527,8,8,8,7 1533,9,7,8,7
1538,8,8,7,7 1548,8,6,8,6 1554,8,8,7,7 1559,7,7,6,6 1570,6,6,5,4 1575,6,6,5,5 1580,6,5,6,5 1586,6,6,5,5 1590,5,5,4,3 1596,6,4,5,4
1601,10,5,8,5 1607,11,8,10,8 1611,11,9,7,7 1617,8,7,7,6 1622,7,7,7,6 1628,9,7,8,7 1632,8,8,6,6 1643,8,6,6,6 1647,6,6,5,5 1653,8,6,8,5
1658,9,8,8,6 1664,8,8,6,6 1668,9,6,9,6 1674,10,9,8,7`);
/* Weeks that opened and closed on one price: x, price */
const dashes = pairs(`
71,5 90,5 115,5 120,5 127,5 150,6 155,6 162,6 170,6 188,6 192,5 234,7 240,7 246,7 252,7 258,7 270,7 284,7 303,7 313,7 335,5 345,5 362,5 368,5 374,5 381,5
412,4 416,4 436,4 447,4 458,4 468,14 479,18 489,19 499,19 562,24 577,20 645,28 677,22 687,25 718,23 729,22 745,23 755,24 761,24 808,21 812,21
839,20 860,20 881,20 891,17 901,20 928,19 938,18 943,18 965,16 970,16 975,16 980,16 985,16 991,18 995,18 1001,16 1005,15 1011,17 1017,17 1037,14 1043,13
1058,11 1074,13 1079,12 1083,11 1100,12 1105,13 1110,15 1115,12 1121,12 1126,12 1136,11 1152,13 1157,11 1168,10 1173,11 1178,11 1183,11 1199,5 1209,6
1215,8 1220,9 1241,6 1246,7 1267,7 1272,6 1277,6 1543,7 1565,6 1638,6`);

const price = document.getElementById('price');
const py = n => Math.round(634 - n * 8.28);
const g = add(price, 'g', { 'shape-rendering': 'crispEdges' });
for (const [x, hi, op, cl, lo] of candles) {
  const top = py(Math.max(op, cl)), bottom = py(Math.min(op, cl));
  add(g, 'path', { d: `M${x + .5} ${py(hi)}V${py(lo)}`, stroke: DARK, 'stroke-width': 1 });
  if (op === cl) { add(g, 'rect', { x: x - 2, y: top - 1, width: 5, height: 2, fill: DARK }); continue; }
  add(g, 'rect', { x: x - 2, y: top, width: 5, height: bottom - top + 1, fill: DARK });
  add(g, 'rect', { x: x - 1, y: top + 1, width: 2, height: bottom - top - 1, fill: cl > op ? '#4fd64a' : '#d8705f' });
}
for (const [x, n] of dashes) add(g, 'rect', { x: x - 2, y: py(n) - 1, width: 5, height: 2, fill: DARK });

const ema9 = pairs(`51,591 58,588 66,590 83,591 92,588 103,588 110,590 127,591 134,594 150,593 160,590 172,589 186,588 196,590 203,589 211,583 230,581 250,578 266,576 285,580 300,580 321,583 335,587 349,591 367,594 386,600 400,599 417,600 432,600 442,598 448,599 456,600 462,602 467,586 473,560 483,531 494,513 505,499 510,491 520,491 525,480 531,447 541,419 546,418 556,428 562,430 572,443 578,449 582,450 588,458 593,415 603,381 609,375 613,381 619,383 625,390 630,393 635,384 643,389 651,393 656,388 661,391 666,389 671,405 678,415 687,420 692,426 703,436 713,440 719,441 724,445 729,447 734,452 746,449 755,444 765,440 772,436 777,439 783,445 797,450 812,454 830,452 833,450 838,452 849,448 853,452 860,456 870,458 880,459 888,468 896,474 902,473 907,468 918,469 930,472 940,476 948,479 955,485 963,490 975,495 985,497 994,492 1006,497 1013,497 1021,495 1030,502 1042,510 1056,524 1068,531 1076,529 1084,533 1090,528 1105,528 1110,525 1116,528 1130,531 1137,534 1143,533 1152,530 1167,539 1183,541 1190,551 1199,564 1205,568 1210,572 1220,569 1224,565 1233,571 1240,576 1248,576 1255,573 1265,576 1272,577 1277,579 1284,576 1289,572 1294,558 1300,540 1306,523 1312,508 1315,502 1323,493 1325,491 1329,474 1335,461 1339,447 1345,415 1350,390 1354,373 1360,380 1371,400 1382,433 1386,441 1392,442 1396,450 1402,457 1407,460 1414,460 1418,471 1424,480 1432,493 1438,507 1446,518 1459,537 1467,544 1480,553 1488,553 1492,551 1495,554 1515,554 1522,557 1530,561 1542,566 1553,567 1559,572 1567,577 1582,581 1594,585 1597,585 1605,577 1620,576 1630,575 1640,578 1647,582 1657,577 1662,578 1674,573`);
const ema63 = pairs(`51,584 120,584 125,587 222,587 230,586 250,584 300,584 350,586 415,588 422,590 447,590 455,591 465,591 473,586 489,577 500,570 515,562 521,560 530,550 537,540 547,532 562,524 588,516 598,502 613,489 625,483 631,482 635,477 651,472 656,468 667,463 685,462 692,460 713,460 722,458 745,458 755,456 772,454 780,455 820,455 833,453 840,455 850,453 863,455 883,456 892,458 927,460 948,463 963,467 978,470 1000,473 1022,475 1052,483 1063,490 1083,494 1105,497 1135,504 1165,507 1185,513 1200,520 1220,526 1243,533 1265,537 1285,543 1300,540 1315,532 1325,528 1336,520 1355,498 1366,492 1382,489 1407,489 1415,486 1433,489 1441,494 1460,501 1484,510 1510,516 1555,528 1580,536 1600,542 1611,543 1618,545 1634,547 1648,552 1670,552 1674,554`);
const ema200 = pairs(`51,503 83,508 110,512 145,518 170,522 186,523 195,525 243,528 265,531 300,534 355,539 400,545 430,548 455,550 465,551 480,548 500,546 525,542 545,536 570,532 588,530 603,522 625,518 640,513 665,507 690,504 712,503 730,500 760,498 800,494 850,489 880,488 1020,488 1045,490 1090,493 1130,495 1165,498 1185,500 1220,506 1260,512 1285,515 1295,514 1325,512 1342,509 1355,502 1390,500 1392,499 1436,498 1445,500 1480,503 1510,506 1555,512 1595,518 1622,520 1630,521 1660,525 1674,526`);
const line = (svg, pts, color, width) => add(svg, 'path', { d: toPath(pts), fill: 'none', stroke: color, 'stroke-width': width, 'stroke-linejoin': 'round' });
line(price, ema9, '#ff0090', 3);
line(price, ema200, '#ff8040', 3);
line(price, ema63, '#3240ff', 3);
for (const [cx, cy] of [[465, 605], [1285, 582], [1676, 567]])
  add(price, 'ellipse', { cx, cy, rx: 29, ry: 24, fill: 'none', stroke: '#f01010', 'stroke-width': 1.3 });

/* MACD ribbons */
const fast = pairs(`51,858 62,857 80,858 97,856 127,856 133,861 139,859 150,858 157,856 169,855 175,856 186,853 200,854 212,847 218,850 232,847 265,847 280,852 310,855 317,852 330,858 350,861 380,861 390,864 415,864 430,860 440,859 455,859 462,861 466,855 468,845 473,823 481,805 489,794 510,784 516,793 521,795 526,784 531,761 540,751 547,758 555,781 563,792 568,808 577,823 588,834 592,800 603,775 609,775 613,786 619,793 630,813 635,808 650,826 656,823 666,829 672,847 677,857 685,862 694,870 707,876 718,874 728,876 734,880 743,873 755,865 764,862 771,856 784,866 800,868 815,866 825,862 832,860 838,862 849,856 852,862 866,864 873,864 880,862 886,868 894,874 906,866 935,866 945,867 965,876 985,876 995,869 1004,871 1020,865 1035,870 1050,880 1063,885 1075,880 1085,880 1095,872 1112,866 1125,868 1140,868 1152,863 1165,868 1183,867 1200,885 1213,886 1225,874 1235,877 1250,875 1262,871 1280,869 1288,864 1294,848 1304,824 1315,802 1324,800 1330,787 1339,773 1345,748 1354,727 1364,751 1372,778 1381,810 1385,827 1394,834 1403,854 1412,857 1420,870 1432,881 1440,895 1459,910 1480,910 1492,899 1500,896 1516,885 1550,883 1570,882 1585,882 1600,880 1608,868 1628,863 1636,863 1648,867 1658,859 1664,860 1671,855 1674,857`);
const fastSignal = pairs(`51,858 133,857 200,855 212,853 232,850 260,848 280,850 310,853 325,855 355,858 390,863 420,863 440,862 464,861 474,853 483,833 495,813 510,799 516,796 524,796 531,787 540,771 549,768 557,774 566,783 578,802 588,811 598,803 606,793 614,789 622,791 640,806 655,815 666,822 676,834 690,853 700,864 712,872 735,877 750,873 764,867 775,864 790,866 810,867 832,863 850,861 865,863 880,863 895,871 906,870 935,867 955,869 968,874 985,875 1000,872 1020,868 1040,874 1060,881 1085,880 1100,874 1118,869 1140,867 1165,866 1183,868 1200,875 1210,880 1225,880 1250,877 1270,873 1280,871 1294,866 1304,849 1318,824 1335,800 1348,771 1354,759 1362,754 1372,763 1385,793 1402,826 1424,850 1440,876 1460,896 1475,905 1485,904 1500,899 1520,890 1550,884 1598,883 1612,874 1628,868 1648,867 1662,864 1674,859`);
const slow = pairs(`51,897 60,896 80,895 95,892 140,890 175,886 203,884 212,882 225,882 245,877 275,874 315,871 383,871 390,873 445,873 462,874 472,868 488,854 500,845 508,842 515,839 525,834 535,818 550,808 558,807 570,801 588,799 593,789 603,779 615,773 630,771 635,766 666,759 690,765 725,772 738,775 772,778 785,780 800,784 830,790 860,796 875,800 900,808 925,814 945,820 970,829 1000,836 1030,844 1055,852 1085,861 1110,863 1140,867 1165,874 1185,877 1200,884 1240,891 1280,898 1290,897 1303,891 1320,880 1335,870 1347,855 1355,841 1370,836 1387,835 1420,835 1430,838 1450,847 1480,858 1510,868 1550,879 1580,888 1602,891 1640,893 1668,895 1674,894`);
const slowSignal = pairs(`51,914 100,908 170,900 230,893 290,886 360,880 390,878 430,877 470,876 500,871 530,862 560,850 590,840 600,837 625,824 650,815 666,806 700,795 740,788 785,785 810,785 860,787 895,791 930,799 960,803 1000,811 1040,819 1070,827 1110,839 1150,850 1185,856 1210,862 1240,868 1280,876 1310,878 1335,878 1360,872 1400,861 1430,856 1455,854 1480,854 1520,857 1560,862 1600,870 1640,876 1674,880`);

function sample(pts) {
  const out = [];
  let k = 0;
  for (let x = 51; x <= 1674; x++) {
    while (k < pts.length - 2 && pts[k + 1][0] < x) k++;
    const [x0, y0] = pts[k], [x1, y1] = pts[k + 1];
    out.push(y0 + (y1 - y0) * (x - x0) / (x1 - x0));
  }
  return out;
}
function ribbon(a, b) {
  const A = sample(a), B = sample(b), up = [], down = [];
  A.forEach((v, i) => {
    if (i === A.length - 1) return;
    const x = 51 + i;
    const quad = `M${x} ${v.toFixed(1)}L${x + 1.2} ${A[i + 1].toFixed(1)}V${B[i + 1].toFixed(1)}L${x} ${B[i].toFixed(1)}Z`;
    (v < B[i] ? up : down).push(quad);
  });
  return [up.join(''), down.join('')];
}
const macd = document.getElementById('macd');
const defs = add(macd, 'defs', {});
function gradient(id, stops) {
  const el = add(defs, 'linearGradient', { id, gradientUnits: 'userSpaceOnUse', x1: 0, x2: 0, y1: 730, y2: 915 });
  stops.forEach(([offset, color]) => add(el, 'stop', { offset, 'stop-color': color }));
}
gradient('up', [[0, '#10d010'], [.3, '#1cd522'], [1, '#68de72']]);
gradient('down', [[0, '#da6a6a'], [.35, '#d85258'], [.85, '#d01a20'], [1, '#cc1010']]);
const [slowUp, slowDown] = ribbon(slow, slowSignal);
const [fastUp, fastDown] = ribbon(fast, fastSignal);
const clip = add(defs, 'clipPath', { id: 'slow-up' });
add(clip, 'path', { d: slowUp });
add(macd, 'path', { d: slowUp, fill: 'url(#up)' });
add(macd, 'path', { d: slowDown, fill: 'url(#down)' });
line(macd, slowSignal, '#dc6464', 1.5);
line(macd, slow, '#3232dc', 1.5);
add(macd, 'path', { d: fastUp, fill: 'url(#up)' });
add(macd, 'path', { d: fastDown, fill: 'url(#down)' });
add(macd, 'path', { d: fastDown, fill: '#a8320e', 'clip-path': 'url(#slow-up)' });
line(macd, fastSignal, '#dc6464', 1.5);
line(macd, fast, '#3232dc', 1.5);
add(macd, 'rect', { x: 51, y: 855, width: 1784, height: 1, fill: '#3232dc' });
for (const [cx, cy] of [[468, 855], [1287, 855], [1675, 856]])
  add(macd, 'ellipse', { cx, cy, rx: 42, ry: 17, fill: 'none', stroke: '#f01010', 'stroke-width': 1.3 });
for (const d of ['M394 823 535 880', 'M1225 828 1365 885', 'M1618 831 1758 888'])
  add(macd, 'path', { d, stroke: '#000', 'stroke-width': 3 });

/* Volume: x, height, 1 for a rising week */
const volume = document.getElementById('volume');
for (const [x, h, rising] of pairs(`592,1,1 1292,16,1 1297,15,0 1303,18,1 1307,9,0 1313,7,1 1318,3,0 1324,9,1 1328,16,1 1334,7,0 1345,46,1 1349,16,0 1354,4,0 1360,19,0 1364,6,0 1370,1,0 1375,6,0 1381,3,0 1386,1,1 1392,12,1 1396,9,0 1402,3,1 1406,4,1 1412,15,1 1417,7,0 1424,1,0 1428,3,0 1433,4,0 1438,1,0 1444,3,1 1459,1,0 1465,1,1 1490,9,1 1495,1,0 1511,1,0 1596,1,1 1600,13,1 1606,10,1 1610,6,0 1616,1,1 1627,12,1 1632,1,0 1642,10,1 1646,4,0 1652,6,1 1657,1,1 1663,3,0 1667,4,1 1673,4,0`))
  add(volume, 'rect', { x: x - 1, y: 1007 - h, width: 3, height: h, fill: rising ? '#50d050' : '#dc6464' });

/* Axes */
function put(parent, cls, text, prop, value) {
  const el = document.createElement('div');
  el.className = cls;
  el.textContent = text;
  el.style[prop] = value;
  parent.appendChild(el);
  return el;
}
function axis(id, top, height, ticks, labels, tags) {
  const el = document.getElementById(id);
  const pct = y => ((y - top) / height * 100).toFixed(2) + '%';
  ticks.forEach(y => put(el, 'tick', '', 'top', pct(y)));
  labels.forEach(([y, text, major]) => put(el, major ? 'lab major' : 'lab', text, 'top', pct(y)));
  tags.forEach(([y, text, color, cls]) => { put(el, 'tag ' + (cls || ''), text, 'top', pct(y)).style.color = color; });
}
axis('price-axis', 104, 597, [136, 219, 302, 385, 468, 551, 633, 525, 554, 567, 573],
  [[137, '0.06'], [220, '0.05', 1], [303, '0.04'], [385, '0.03'], [469, '0.02'], [634, '0', 1]],
  [[513, '0.0131', '#ff8040'], [540, '0.0097', '#3240ff'], [554, '0.008', '#000', 'last'], [570, '0.0073', '#ff0090']]);
axis('macd-axis', 702, 235, [706, 723, 739, 756, 772, 789, 805, 822, 838, 855, 859, 871, 881, 888, 894, 904, 921],
  [[725, '0.008'], [758, '0.006'], [791, '0.004'], [824, '0.002'], [923, '-0.004']],
  [[832, '0.0000', '#3232dc'], [847, '-0.0003', '#dc6464'], [868, '-0.0016', '#dc6464'], [888, '-0.0024', '#3232dc']]);
axis('volume-axis', 938, 71, [938, 955, 973, 991, 1003],
  [[951, '400M'], [975, '200M']], [[982, '33.4M', '#dc6464']]);

const times = document.getElementById('times');
for (const [x, text] of [[66, ''], [129, '2019'], [187, 'May'], [276, 'Sept'], [354, '2020'], [431, 'May'], [511, 'Sept'], [583, '2021'], [667, 'May'], [761, 'Sept'], [840, '2022'], [928, 'May'], [1005, 'Sept'], [1094, '2023'], [1153, 'May'], [1235, 'Sept'], [1305, '2024'], [1397, 'May'], [1487, 'Sept'], [1581, '2025'], [1669, 'May'], [1759, 'Sept']])
  put(times, /^\d/.test(text) ? 'time major' : 'time', text, 'left', ((x - 51) / 1867 * 100).toFixed(2) + '%');
```
